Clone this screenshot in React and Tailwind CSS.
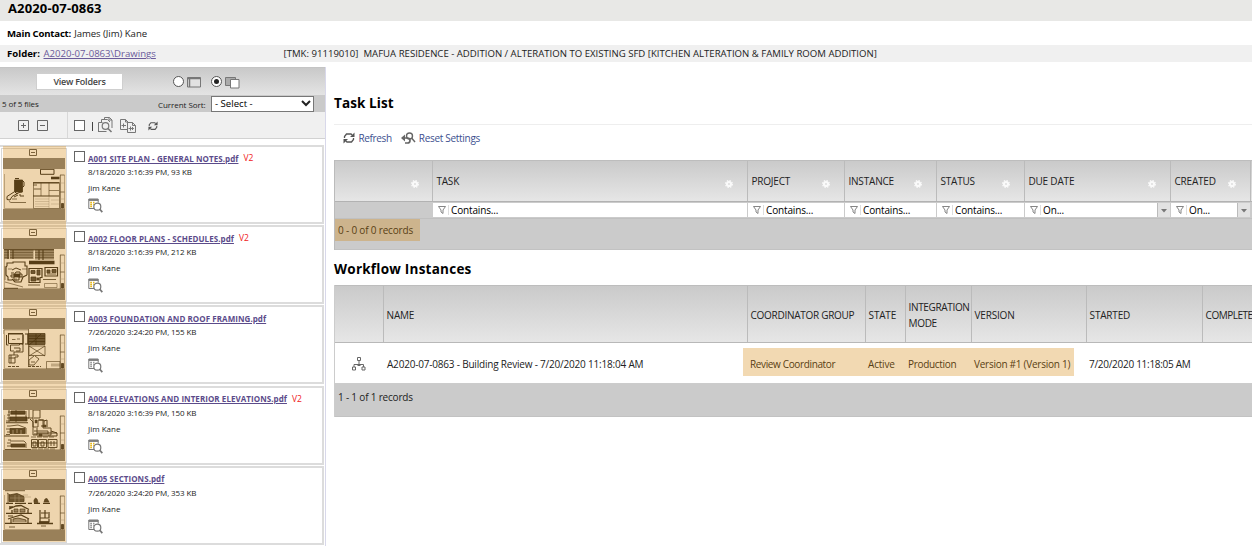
import React from "react";

const files = [
  { name: "A001 SITE PLAN - GENERAL NOTES.pdf", version: "V2", info: "8/18/2020 3:16:39 PM, 93 KB", fresh: true },
  { name: "A002 FLOOR PLANS - SCHEDULES.pdf", version: "V2", info: "8/18/2020 3:16:39 PM, 212 KB", fresh: true },
  { name: "A003 FOUNDATION AND ROOF FRAMING.pdf", info: "7/26/2020 3:24:20 PM, 155 KB" },
  { name: "A004 ELEVATIONS AND INTERIOR ELEVATIONS.pdf", version: "V2", info: "8/18/2020 3:16:39 PM, 150 KB", fresh: true },
  { name: "A005 SECTIONS.pdf", info: "7/26/2020 3:24:20 PM, 353 KB" },
];

const drawings = [
  <g key="0">
    <path d="M11.500 11h8v12h-8z" fill="#222" />
    <path d="M12 9.500h4M19 11l2 2v4l-2 2M18 12v12M12 23l2 2M11 23l-7 4.500v3l3 .5 2-3.500 9-5M17 25v2h4M15 26l-4 2" strokeWidth="1" />
    <path d="M6 32.500l2 1h15M9 30h5" strokeWidth=".7" />
    <path d="M37.500 .3h13.500v5h-13.500z" strokeWidth="1" />
    <path d="M48 9h8.500" strokeWidth="2.600" />
    <path d="M30.500 13.500h26v26h-26zM38 13.500v13.500M46 13.500v13.500M46 21.500h10" strokeWidth=".6" />
    <path d="M30 13.800h26M30 27h26" strokeWidth="1.200" />
    <path d="M31 20h7M30 16h4" strokeWidth=".8" />
    <path d="M32 30h14M32 32.500h14M32 35h14M32 37.500h14M46 27v12M48 31h8M48 35h8" opacity=".25" />
  </g>,
  <g key="1">
    <path d="M1 .5h29.500v9.500h-29.500zM32 .5h19v10h-19z" fill="#8a8a8a" stroke="none" />
    <path d="M1 .7h50M1 3.500h29M1 6h29M1 8.500h29M32 3.500h19M32 6h19M32 8.500h19" strokeWidth=".5" />
    <path d="M1 .700h50M5 1v9M10 1v9M36 1v10M40 1v10" strokeWidth="1.100" />
    <path d="M6.500 1v9" stroke="#ddd" strokeWidth="1" />
    <path d="M26 13.500h25.500" strokeWidth="3.600" />
    <path d="M4 17v-3h6v-1h12v4h2v9M4 17l-1 1v8l2 2v3h4M24 26l-4 2-2 5h-6l-3-3" strokeWidth="1.100" />
    <path d="M8 24h3M13 23h4v2h2v3h-3v3h-5v-3H8v-2h3zM9 21l4-2 5 2" strokeWidth="1" />
    <path d="M11 25h6v3h-6z" fill="#222" />
    <path d="M2 33l18 5M2 17v14M5 20h4M19 20h5M13 29v3" strokeWidth=".6" />
    <path d="M26 19.500h13v9h-2v5H26zM42 18.500h12.500v8.500H42z" strokeWidth="1.200" />
    <path d="M28 21.500h4v3h-4zM34 21h3v5h-3zM28 28h5v4h-5zM34 29h2v2h-2zM44 21h3v3h-3zM49 20.500h4v3h-4zM44 25h9" fill="#444" strokeWidth=".8" />
    <path d="M25 36h12M40 30.500h13" strokeWidth=".8" />
    <path d="M41.500 34.500h12.500v4h-12.500z" strokeWidth=".5" />
    <path d="M1 39.500h14" strokeWidth="1.400" />
  </g>,
  <g key="2">
    <path d="M1 .8h24M1 1v4" strokeWidth=".6" />
    <path d="M5.500 5h14.500v9.500H5.500zM3.500 6v10h2M20 6v9h-1M5 4.500h15" strokeWidth="1" />
    <path d="M9 10.500h3.500M14 10h3" strokeWidth=".7" />
    <path d="M7.500 16h9v-1h3.500v8h-9v3h4v2h-3v6H6v-8h5M11 19h6v3h-4M7.500 16v6h3.500M6 29h6M8 26v8" strokeWidth=".9" />
    <path d="M5 37.500h12M25 37.500h13" strokeWidth=".9" strokeDasharray="3 1" />
    <path d="M25 4.500h17v11H25z" fill="#444" />
    <path d="M22 5h3v10h-3" strokeWidth="1.200" />
    <path d="M25 7h17M25 9.500h17M25 12.500h17M33 5v11M38 5l-5 5-7 6" stroke="#111" strokeWidth=".7" />
    <path d="M25.500 0v37M26 17h16v9.500H26zM26 17l8 5-8 5M42 17l-8 5 8 5" strokeWidth=".7" />
    <path d="M32 27l4 3-5 6h-5v-5l5-4M28 33h4" strokeWidth=".8" />
    <path d="M43.500 32.500h13.500v7.500H43.500z" strokeWidth=".6" />
    <path d="M48 36h9" opacity=".3" strokeWidth="3" />
  </g>,
  <g key="3">
    <path d="M8 1h14v3h-14zM7 7h17v4H7zM7 18.500h15v5H7zM8 34h14v3H8z" fill="#333" />
    <path d="M6 0v12M13 0v12M23 1v10M26 0v8h-3M7 4h15" strokeWidth=".8" />
    <path d="M3 12.800h22M1 26h25M2 39.500h26" strokeWidth="1.100" />
    <path d="M5 2h3M4 5h3M4 8h3M3 11h4M4 16h3M3 19h4M4 22h3M3 24.500h4M5 30h3M4 33h4M4 36h4M7 16l8-1 8 3v6M7 31h14l2 2v5" strokeWidth=".8" />
    <path d="M10 20v4M14 19v4M18 20v4" stroke="#aaa" strokeWidth=".8" />
    <path d="M25 8h5V0h7v8h-6M30 8v9h5v-7h5v8h8v7h-3M27 9l3 3v13h4v-7M31 21h14v3h-14" strokeWidth=".9" />
    <path d="M36 10h5v6h-3M44 10v7M41 11l3-1M34 23h20v3h-20M48 21l6 2" strokeWidth="1" />
    <path d="M32 10h2v3h-2zM40 15h3v2h-3zM36 24h3v2h-3z" fill="#333" strokeWidth=".5" />
    <path d="M28.500 29.500h6v8h-6zM35.500 29.500h8v8h-8zM45 29.500h9v8h-9zM28 33h26" strokeWidth=".9" />
    <path d="M30 32h3v4h-3zM38 32h3v4h-3zM48 31v5M51 31v5" strokeWidth=".9" />
    <path d="M28 27h24M29 39h24" strokeWidth=".7" strokeDasharray="5 1" />
  </g>,
  <g key="4">
    <path d="M2 .7h20M4 3l3 2M5 4v9" strokeWidth=".8" />
    <path d="M6 5l8-1.500 7 3v5H6z" fill="#444" />
    <path d="M7 8h14M12 5v7M16 5v7" stroke="#999" strokeWidth=".6" />
    <path d="M3 13.300h7M12 13.300h11M25 13.300h4M31 13.300h6M40 13.300h7" strokeWidth="1.200" />
    <path d="M22 7h6M20 5h5" strokeWidth=".5" opacity=".5" />
    <path d="M31 12.500h4l-1-3.500-1.500-1L31 10zM41 12h5l-2-3.500-2 .5z" fill="#333" strokeWidth=".7" />
    <path d="M6 19l7-3 5-.5 8 4M6 17h4M9 20v3M25 20v3" strokeWidth="1.300" />
    <path d="M11 22v-3h4v3zM17 22v-3h5v3z" fill="#888" strokeWidth=".7" />
    <path d="M3 23.300h26M2 33.300h27" strokeWidth="1.200" />
    <path d="M5 29l6-2 7-2 8 4M8 29v4M25 29v4M5 26h5" strokeWidth="1.200" />
    <path d="M10 32v-3l5-1 8 2v2" fill="#999" strokeWidth=".8" />
    <path d="M37 20v13M38 23h7M42 20v8M46 22v6h-9M37 28v4h9v-3" strokeWidth="1.200" />
    <path d="M36 32h10M34 33.500h16" strokeWidth="1.600" />
    <path d="M6 37h6M38 36h5" strokeWidth=".8" />
  </g>,
];

function Thumbnail({ index }) {
  return (
    <div className="h-[62px] w-[62px] bg-[#808080] pt-[11px]">
      <svg viewBox="0 0 62 40" className="block h-[40px] w-[62px] overflow-hidden bg-[#fafafa]" fill="none" stroke="#222" strokeWidth="0.8">
        {drawings[index]}
        <path d="M61.500 6v34M1.500 5v34.500h60" stroke="#666" strokeWidth=".5" />
        <path d="M57.300 6v34M57 6h4.500M57 23h4.500" stroke="#444" strokeWidth=".8" />
        <path d="M57 14h4.500M57 30h4.500" stroke="#999" strokeWidth=".5" />
        <path d="M58.500 34.500h2v4.500h-2z" fill="#333" />
      </svg>
    </div>
  );
}

function DetailsIcon({ fresh }) {
  return (
    <svg viewBox="0 0 15 15" className="block h-[15px] w-[15px]" fill="none" stroke="#777" strokeWidth="1">
      <path d="M6 10.500H.8V1h9.400v3.500" />
      <path d="M.8 2h9.400" strokeWidth="1.800" />
      <path d="M2.200 4.600h1.800M5 4.600h1.500M2.200 6.600h1.800M5 6.600h.8M2.200 8.600h1.800" stroke={fresh ? "#e8b820" : "#999"} strokeWidth="1.500" />
      <circle cx="9.300" cy="8.700" r="3.500" fill="#fff" strokeWidth="1.200" />
      <path d="M11.800 11.200l2.500 2.900" strokeWidth="1.700" />
    </svg>
  );
}

function BoxIcon({ plus, className }) {
  return (
    <svg viewBox="0 0 11 11" className={className} fill="none" stroke="#666" strokeWidth="1">
      <path d="M.5.5h10v10h-10zM3 5.500h5" />
      {plus && <path d="M5.500 3v5" />}
    </svg>
  );
}

function FileCard({ file, index }) {
  return (
    <div className="flex h-[80.2px] flex-col">
      <div className="flex h-[79px] border-t-2 border-r-2 border-b-2 border-[#dcdcdc] bg-white">
        <div className="ml-px mt-px flex h-[74px] w-[66px] shrink-0 flex-col items-center border border-[#d8d8d8]">
          <svg viewBox="0 0 8 8" className="mb-px ml-[-3px] block h-[8px] w-[8px] shrink-0" fill="none" stroke="#555" strokeWidth="1"><path d="M.5.5h7v6h-7zM2 3.500h4" /></svg>
          <div className="self-start pl-px"><Thumbnail index={index} /></div>
        </div>
        <div className="ml-[7px] mt-[4px] h-[11px] w-[11px] shrink-0 border border-[#666] bg-white" />
        <div className="ml-[3px] mt-[4.500px] flex flex-col whitespace-nowrap text-[8px] text-[#222]">
          <div className="flex h-[14px] items-center">
            <a className="font-bold tracking-[0.06px] text-[#5b4b8a] underline underline-offset-1">{file.name}</a>
            {file.version && <span className="ml-[5px] text-[8.500px] text-[#f02020]">{file.version}</span>}
          </div>
          <div className="flex h-[13px] items-center tracking-[-0.1px]">{file.info}</div>
          <div className="mt-[2px] flex h-[15px] items-center">Jim Kane</div>
          <div className="mt-[2.500px]"><DetailsIcon fresh={file.fresh} /></div>
        </div>
      </div>
    </div>
  );
}

function SyncArrows({ className }) {
  return (
    <svg viewBox="0 0 12 12" className={className} fill="none" stroke="#555" strokeWidth="1.300">
      <path d="M1.500 6V4.500L3.500 2h4.500l1.200 1M10.500 6v1.500L8.500 10H4L2.800 9" />
      <path d="M11.500 .5v4.500H7zM.5 11.500V7H5z" fill="#555" stroke="none" />
    </svg>
  );
}

function Toolbar() {
  return (
    <div className="flex h-[27px] border-b border-[#d2d2d2] bg-[#f0f0f0]">
      <div className="flex w-[68px] items-center gap-[8px] border-r border-[#d8d8d8] pl-[18px]">
        <BoxIcon plus className="h-[11px] w-[11px]" />
        <BoxIcon className="h-[11px] w-[11px]" />
      </div>
      <div className="flex items-center pl-[6px]">
        <div className="mt-px h-[11px] w-[11px] border border-[#666] bg-white" />
        <div className="ml-[7px] mt-[3px] h-[9px] w-px bg-[#444]" />
        <svg viewBox="0 0 15 16" className="ml-[5px] h-[16px] w-[15px]" fill="none" stroke="#777" strokeWidth="1">
          <path d="M6.500 3V.5h5L14 3v8M11 .5V3h3M3.500 5V2.500h6L12 5M.5 15V5.500h4M.5 14.500h8" />
          <circle cx="7.500" cy="9" r="3.300" fill="#f0f0f0" strokeWidth="1.200" />
          <path d="M10 11.500l3.500 3.500" strokeWidth="1.600" />
        </svg>
        <svg viewBox="0 0 16 14" className="ml-[7px] mt-px h-[14px] w-[16px]" fill="none" stroke="#777" strokeWidth="1">
          <path d="M7 10.500H.5V.5h5L8 3v1M5.500.5V3H8M7.500 13.500v-10h5l3 3v7zM12.500 3.500v3h3M3.500 4.500v4M1.500 6.500H6M10.500 7.500v4M8.500 9.500h5M12 8l1.500 1.500L12 11" />
        </svg>
        <SyncArrows className="ml-[12px] mt-px h-[10px] w-[10px]" />
      </div>
    </div>
  );
}

function Sidebar() {
  return (
    <aside className="relative h-[479px] w-[326px] shrink-0 overflow-hidden border-r border-[#d8d8ea] bg-white">
      <div className="flex h-[28px] items-center border-t border-[#c4c4c4] bg-linear-to-b from-[#c9c9c9] to-[#e4e4e4] pl-[36px]">
        <button className="flex h-[17px] w-[87px] items-center justify-center border border-[#cfcfcf] bg-white pt-px text-[9px] font-semibold tracking-[-0.22px] text-[#444]">View Folders</button>
        <span className="ml-[50px] h-[11px] w-[11px] rounded-full border border-[#555] bg-white" />
        <svg viewBox="0 0 14 11" className="ml-[3px] mt-[2px] h-[11px] w-[14px]" fill="#e2e2e2" stroke="#777">
          <path d="M.5.5h13v9.500h-13z" /><path d="M.5 1.500h13M2.500 2v8" strokeWidth="1.500" />
        </svg>
        <span className="ml-[10px] flex h-[11px] w-[11px] items-center justify-center rounded-full border border-[#555] bg-white"><span className="h-[5px] w-[5px] rounded-full bg-[#222]" /></span>
        <svg viewBox="0 0 15 12" className="ml-[3px] mt-[2px] h-[12px] w-[15px]" stroke="#777">
          <path d="M.5.500h10v8h-10z" fill="#aaa" /><path d="M5.500 2.500h8.500v8.500h-8.500z" fill="#fff" />
        </svg>
      </div>
      <div className="flex h-[17px] items-center bg-[#cacaca] pl-[2px] text-[8px] text-[#222]">
        <span className="w-[156px] pt-px tracking-[-0.1px]">5 of 5 files</span>
        <span className="w-[53px] whitespace-nowrap pt-[2px] tracking-[-0.05px]">Current Sort:</span>
        <span className="flex h-[16px] w-[103px] items-center justify-between border border-[#777] bg-white pl-[3px] pr-[2px] pt-px text-[9.600px] text-black">
          - Select -
          <svg viewBox="0 0 10 7" className="mb-[2px] h-[7px] w-[10px]" fill="none" stroke="#222" strokeWidth="2"><path d="M1 1l4 4 4-4" /></svg>
        </span>
      </div>
      <Toolbar />
      <div className="flex w-[324px] flex-col pt-[6px]">
        {files.map((f, i) => <FileCard key={f.name} file={f} index={i} />)}
      </div>
      <div className="absolute left-[3px] top-[79px] h-[396px] w-[63px] bg-[#d38000]/30" />
    </aside>
  );
}

function Gear() {
  return (
    <svg viewBox="0 0 8 8" className="h-[8px] w-[8px] shrink-0" fill="none" stroke="#fafafa">
      <circle cx="4" cy="4" r="2" strokeWidth="2.200" />
      <circle cx="4" cy="4" r="3.400" strokeWidth="1.200" strokeDasharray="1.500 1.170" />
    </svg>
  );
}

const taskColumns = [
  { w: "w-[98px]", gear: "mr-[13px]" },
  { label: "TASK", w: "w-[315px]", gear: "mr-[14px]", filter: "Contains..." },
  { label: "PROJECT", w: "w-[97px]", gear: "mr-[14px]", filter: "Contains..." },
  { label: "INSTANCE", w: "w-[92px]", gear: "mr-[14px]", filter: "Contains..." },
  { label: "STATUS", w: "w-[88px]", gear: "mr-[14px]", filter: "Contains..." },
  { label: "DUE DATE", w: "w-[146px]", gear: "mr-[14px]", filter: "On...", menu: true },
  { label: "CREATED", w: "w-[80px]", gear: "mr-[14px]", filter: "On...", menu: true },
  { w: "w-[40px]" },
];

function TaskTable() {
  return (
    <div className="mt-[13px] w-[956px] border-l border-[#bbb] text-[10px] tracking-[-0.18px] text-[#222]">
      <div className="flex h-[42px] border-y border-t-[#bdbdbd] border-b-[#b2b2b2] bg-linear-to-b from-[#cacaca] to-[#e6e6e6]">
        {taskColumns.map((c, i) => (
          <div key={i} className={`flex shrink-0 items-center justify-between border-r border-[#bbb] pl-[3.400px] pt-px ${c.w}`}>
            <span>{c.label}</span>
            {c.gear && <span className={`pt-[4px] ${c.gear}`}><Gear /></span>}
          </div>
        ))}
      </div>
      <div className="flex h-[17px] border-b border-[#c0c0c0] bg-[#cbcbcb]">
        {taskColumns.map((c, i) => (
          <div key={i} className={`flex shrink-0 pr-px pt-px ${c.w}`}>
            {c.filter && (
              <div className="flex h-[14px] w-full items-center bg-white pl-[5px] tracking-[-0.14px] text-black">
                <svg viewBox="0 0 8 8" className="h-[8px] w-[8px]" fill="none" stroke="#777" strokeWidth=".9"><path d="M.5.500h7L5 4v3.500L3 6V4z" /></svg>
                <span className="ml-[2px] h-[10px] w-px bg-[#ddd]" />
                <span className="ml-[2px] flex-1 pt-px">{c.filter}</span>
                {c.menu && (
                  <span className="flex h-full w-[13px] items-center justify-center border-l border-[#bbb] bg-[#e2e2e2]">
                    <svg viewBox="0 0 6 4" className="mt-[2px] h-[4px] w-[6px]" fill="#777"><path d="M0 0h6L3 3.500z" /></svg>
                  </span>
                )}
              </div>
            )}
          </div>
        ))}
      </div>
      <div className="h-[31px] border-b border-[#c2c2c2] bg-[#cbcbcb]">
        <div className="relative flex h-[22px] w-[85px] items-center pl-[3px]">
          0 - 0 of 0 records
          <div className="absolute inset-0 bg-[#d38000]/30" />
        </div>
      </div>
    </div>
  );
}

const flowColumns = [
  { w: "w-[49px]" },
  { label: "NAME", value: "A2020-07-0863 - Building Review - 7/20/2020 11:18:04 AM", w: "w-[364px]", cell: "pl-[3px] tracking-[-0.2px]" },
  { label: "COORDINATOR GROUP", value: "Review Coordinator", w: "w-[118px]", track: "tracking-[-0.28px]", cell: "pl-[2px] tracking-[-0.36px]" },
  { label: "STATE", value: "Active", w: "w-[40px]", cell: "pl-[2px]" },
  { label: "INTEGRATION MODE", value: "Production", w: "w-[66px]", track: "tracking-[-0.35px]", cell: "pl-[2px] tracking-[-0.3px]" },
  { label: "VERSION", value: "Version #1 (Version 1)", w: "w-[115px]", cell: "pl-[2px] tracking-[-0.26px]" },
  { label: "STARTED", value: "7/20/2020 11:18:05 AM", w: "w-[116px]", cell: "pl-[2px] tracking-[-0.28px]" },
  { label: "COMPLETE", value: "", w: "w-[49px]", track: "tracking-[-0.5px]" },
];

function WorkflowTable() {
  return (
    <div className="mt-[6px] w-[918px] border-l border-[#ccc] text-[10px] tracking-[-0.19px] text-[#222]">
      <div className="flex h-[58px] border-y border-t-[#bdbdbd] border-b-[#b8b8b8] bg-linear-to-b from-[#cacaca] to-[#e6e6e6]">
        {flowColumns.map((c, i) => (
          <div key={i} className={`flex shrink-0 items-center pl-[2.600px] pt-px leading-[16px] ${i < 7 ? "border-r border-[#bbb]" : ""} ${c.track || ""} ${c.w}`}>{c.label}</div>
        ))}
      </div>
      <div className="relative flex h-[41px] border-b border-[#ccc] bg-white">
        {flowColumns.map((c, i) => (
          <div key={i} className={`flex shrink-0 items-center whitespace-nowrap pt-[3px] ${c.cell || ""} ${c.w}`}>
            {i === 0 ? (
              <svg viewBox="0 0 14 14" className="mb-px ml-[17px] h-[14px] w-[14px]" fill="none" stroke="#666" strokeWidth="1">
                <path d="M5.500.500h3v3h-3zM.5 10h3v3h-3zM10 10h3v3h-3zM7 3.500V9M2 10V7.500h9.500V10M5.500 8.500h3" />
              </svg>
            ) : c.value}
          </div>
        ))}
        <div className="absolute left-[408px] top-[5px] h-[28px] w-[331px] bg-[#d38000]/30" />
      </div>
      <div className="flex h-[33px] border-b border-[#c2c2c2] bg-[#cbcbcb] pl-[3px] pt-[6px] leading-[15px]">1 - 1 of 1 records</div>
    </div>
  );
}

export default function App() {
  return (
    <div className="flex h-[546px] w-[1252px] flex-col overflow-hidden bg-white font-['Open_Sans',sans-serif] text-[#222]">
      <header>
        <div className="flex h-[21px] items-center bg-[#e8e8e6] pb-[3px] pl-[8px] text-[13px] font-bold tracking-[0.15px] text-black">A2020-07-0863</div>
        <div className="flex h-[24px] items-center pl-[7px] pt-[2px] text-[9.600px]"><b className="mr-[3px] tracking-[-0.2px] text-black">Main Contact:</b><span className="tracking-[-0.05px]">James (Jim) Kane</span></div>
        <div className="flex h-[17px] items-center bg-[#f0f0f0] pl-[7px] pt-[2px] text-[9.600px]">
          <b className="w-[36.500px] text-black">Folder:</b>
          <a className="w-[240px] text-[#6a5a9a] underline underline-offset-1">A2020-07-0863\Drawings</a>
          <span className="whitespace-pre">[TMK: 91119010]  MAFUA RESIDENCE - ADDITION / ALTERATION TO EXISTING SFD [KITCHEN ALTERATION &amp; FAMILY ROOM ADDITION]</span>
        </div>
      </header>
      <div className="flex pt-[5px]">
        <Sidebar />
        <main className="h-[479px] w-[926px] overflow-hidden pl-[8px]">
          <h2 className="mt-[26px] h-[20px] text-[13.500px] font-bold leading-[20px] tracking-[0.1px] text-black">Task List</h2>
          <div className="mt-[11px] flex h-[23px] items-center border-t border-[#eee] pl-[9px] pt-[4px] text-[10px] text-[#3d4f8f]">
            <SyncArrows className="h-[12px] w-[12px]" />
            <span className="ml-[3.500px] pt-px tracking-[-0.35px]">Refresh</span>
            <svg viewBox="0 0 15 13" className="ml-[9px] h-[13px] w-[15px]" fill="none" stroke="#666" strokeWidth="1.400">
              <circle cx="8.500" cy="4" r="3" /><path d="M10.800 6.200L14 10" />
              <path d="M1 6h5.500q2.500 0 2.500 2.500T6.500 11H4" strokeWidth="1.700" /><path d="M0 6l4-3.500v7z" fill="#666" stroke="none" />
            </svg>
            <span className="ml-[3px] pt-px tracking-[-0.3px]">Reset Settings</span>
          </div>
          <TaskTable />
          <h2 className="mt-[9px] h-[20px] text-[13.500px] font-bold leading-[20px] tracking-[0.24px] text-black">Workflow Instances</h2>
          <WorkflowTable />
        </main>
      </div>
    </div>
  );
}
